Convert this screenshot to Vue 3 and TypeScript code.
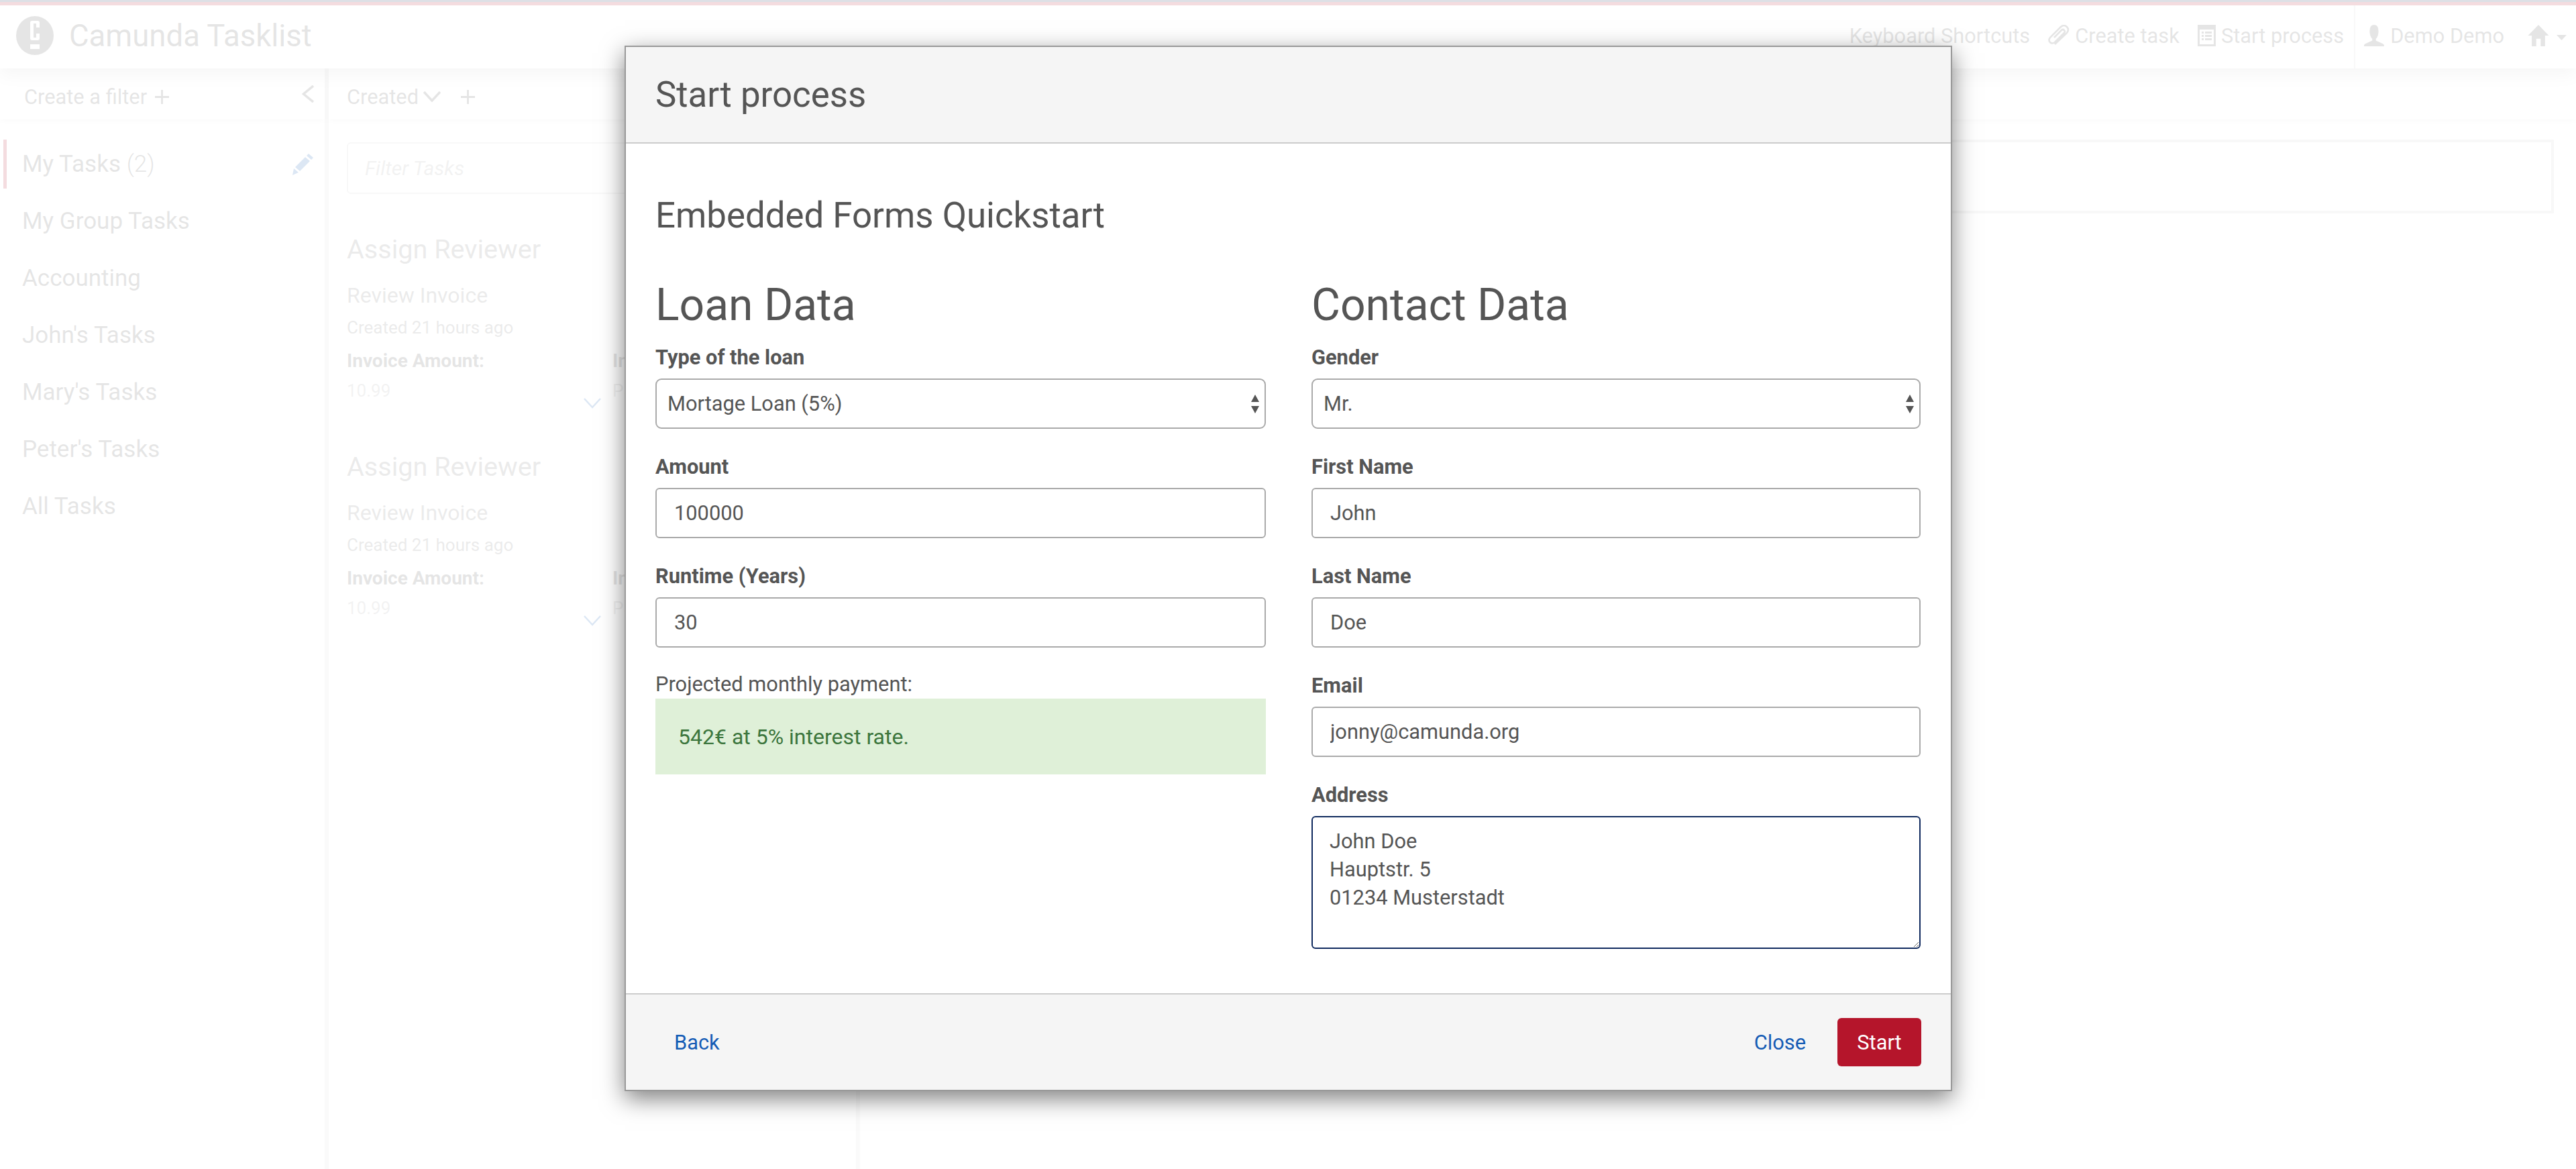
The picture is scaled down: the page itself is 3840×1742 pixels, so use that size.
<script setup lang="ts">
import { ref } from "vue";

const filters = ["My Group Tasks", "Accounting", "John's Tasks", "Mary's Tasks", "Peter's Tasks", "All Tasks"];
const cards = [1, 2];
const address = ref("John Doe\nHauptstr. 5\n01234 Musterstadt");
</script>

<template>
  <div class="page">
    <div class="strip"></div>
    <header class="topbar">
      <div class="brand">
        <svg class="logo" viewBox="0 0 56 58">
          <ellipse cx="28" cy="29" rx="28" ry="29" fill="#555" />
          <path d="M21 10q0-3 3-3h8q3 0 3 3v7h-5v-6h-4v21h4v-6h5v7q0 3-3 3h-8q-3 0-3-3z" fill="#fff" />
          <rect x="21" y="42" width="14" height="7" fill="#fff" />
        </svg>
        <span class="brand-name">Camunda Tasklist</span>
      </div>
      <nav class="nav">
        <span class="nav-item kb">Keyboard Shortcuts</span>
        <span class="nav-item">
          <svg class="ico" viewBox="0 0 32 32"><path d="M10 29 28 12q4-5 0-9t-9 0L3 19q-3 4 0 7t7 0L24 12q2-2 0-4t-4 0L9 19" fill="none" stroke="#555" stroke-width="2.600" /></svg>
          Create task
        </span>
        <span class="nav-item">
          <svg class="ico narrow" viewBox="0 0 27 32"><path fill-rule="evenodd" d="M0 0h27v32H0zM3 7v22h21V7zM6 10h3v3H6zM11 10h10v3H11zM6 15h3v3H6zM11 15h10v3H11zM6 20h3v3H6zM11 20h10v3H11z" fill="#555" /></svg>
          Start process
        </span>
        <span class="divider"></span>
        <span class="nav-item user">
          <svg class="ico" viewBox="0 0 32 34"><path d="M16 0q7 0 7 10 0 8-4 12v3l11 5q2 1 2 3v1H0v-1q0-2 2-3l11-5v-3q-4-4-4-12 0-10 7-10z" fill="#555" /></svg>
          Demo Demo
        </span>
        <span class="home">
          <svg class="ico" viewBox="0 0 33 34"><path d="M16.500 0 33 17h-6v17h-7V22h-7v12H6V17H0z" fill="#555" /></svg>
          <svg class="caret" viewBox="0 0 15 8"><path d="M0 0h15L7.500 8z" fill="#555" /></svg>
        </span>
      </nav>
    </header>

    <main class="columns">
      <aside class="sidebar">
        <div class="bar">
          <span>Create a filter</span>
          <svg class="plus" viewBox="0 0 22 22"><path d="M11 0v22M0 11h22" stroke="#555" stroke-width="3" /></svg>
          <svg class="back" viewBox="0 0 18 26"><path d="M17 1 2.500 13 17 25" fill="none" stroke="#555" stroke-width="3.500" /></svg>
        </div>
        <div class="filter active">
          <span>My Tasks <span class="count">(2)</span></span>
          <svg class="pencil" viewBox="0 0 32 32"><path d="M25 0l7 6-3 3-7-6zM20 5l7 6-15 15-7-6zM3 22l7 6-9 4z" fill="#155cb5" /></svg>
        </div>
        <div v-for="f in filters" :key="f" class="filter">{{ f }}</div>
      </aside>

      <section class="list">
        <div class="bar list-bar">
          <span>Created</span>
          <svg class="down" viewBox="0 0 26 16"><path d="M1 1l12 13L25 1" fill="none" stroke="#555" stroke-width="3.500" /></svg>
          <svg class="plus wide" viewBox="0 0 22 22"><path d="M11 0v22M0 11h22" stroke="#555" stroke-width="3" /></svg>
        </div>
        <div class="search">Filter Tasks</div>
        <article v-for="c in cards" :key="c" class="card">
          <h3>Assign Reviewer</h3>
          <p class="sub">Review Invoice</p>
          <p class="time">Created 21 hours ago</p>
          <div class="vars">
            <div><strong>Invoice Amount:</strong><span>10.99</span></div>
            <div><strong>Invoice Number:</strong><span>PSACE-5342</span></div>
          </div>
          <svg class="card-down" viewBox="0 0 26 16"><path d="M1 1l12 13L25 1" fill="none" stroke="#155cb5" stroke-width="2.500" /></svg>
        </article>
      </section>

      <section class="detail">
        <div class="bar blank"></div>
        <div class="detail-box"></div>
      </section>
    </main>

    <div class="overlay"></div>

    <div class="modal">
      <div class="modal-head">Start process</div>
      <form class="modal-body">
        <h3 class="form-title">Embedded Forms Quickstart</h3>
        <div class="form-cols">
          <div class="col">
            <h2>Loan Data</h2>
            <div class="group">
              <label>Type of the loan</label>
              <div class="select-wrap">
                <select><option>Mortage Loan (5%)</option></select>
                <svg class="updown" viewBox="0 0 14 28"><path d="M7 0l6 11H1zM7 28 1 17h12z" fill="#555" /></svg>
              </div>
            </div>
            <div class="group"><label>Amount</label><input value="100000" /></div>
            <div class="group"><label>Runtime (Years)</label><input value="30" /></div>
            <div class="projected">Projected monthly payment:</div>
            <div class="result">542€ at 5% interest rate.</div>
          </div>
          <div class="col">
            <h2>Contact Data</h2>
            <div class="group">
              <label>Gender</label>
              <div class="select-wrap">
                <select><option>Mr.</option></select>
                <svg class="updown" viewBox="0 0 14 28"><path d="M7 0l6 11H1zM7 28 1 17h12z" fill="#555" /></svg>
              </div>
            </div>
            <div class="group"><label>First Name</label><input value="John" /></div>
            <div class="group"><label>Last Name</label><input value="Doe" /></div>
            <div class="group"><label>Email</label><input value="jonny@camunda.org" /></div>
            <div class="group">
              <label>Address</label>
              <textarea v-model="address"></textarea>
            </div>
          </div>
        </div>
      </form>
      <div class="modal-foot">
        <a class="link">Back</a>
        <span class="spacer"></span>
        <a class="link">Close</a>
        <button type="button" class="start">Start</button>
      </div>
    </div>
  </div>
</template>

<style>
html, body { margin: 0; background: #fff; }
</style>

<style scoped>
.page {
  position: relative;
  width: 3840px;
  height: 1742px;
  overflow: hidden;
  background: #fff;
  color: #555;
  font-family: Roboto, "Noto Sans", sans-serif;
  font-size: 30.8px;
}
.strip { height: 8px; box-sizing: border-box; background: #b5152b; border-top: 3px solid #1c3058; position: relative; z-index: 1; }
.topbar {
  height: 94px;
  display: flex;
  justify-content: space-between;
  align-items: center;
  box-shadow: 0 8px 26px rgba(0, 0, 0, .28);
  position: relative;
  background: #fff;
}
.brand { display: flex; align-items: center; padding-left: 24px; gap: 23px; margin-top: -4px; }
.logo { width: 56px; height: 58px; }
.brand-name { font-size: 45.500px; }
.nav { display: flex; align-items: center; height: 100%; padding-right: 14px; }
.nav-item { display: flex; align-items: center; gap: 8px; margin-left: 27px; margin-top: -4px; white-space: nowrap; }
.nav-item.kb { margin-left: 0; }
.ico { width: 32px; height: 32px; }
.ico.narrow { width: 27px; }
.divider { width: 2px; height: 94px; background: #ccc; margin: 0 12px 0 15px; }
.nav-item.user { margin-left: 0; }
.home { display: flex; align-items: center; gap: 11px; margin-left: 35px; margin-top: -4px; }
.caret { width: 15px; height: 8px; margin-top: 6px; }

.columns { display: flex; height: 1640px; }
.bar {
  height: 76px;
  display: flex;
  align-items: center;
  box-sizing: border-box;
  font-size: 30.800px;
  box-shadow: 0 3px 8px rgba(0, 0, 0, .12);
  padding-top: 8px;
}
.sidebar { width: 484px; flex: none; position: relative; }
.sidebar .bar { padding-left: 36px; padding-right: 16px; gap: 12px; }
.plus { width: 21px; height: 21px; }
.plus.wide { margin-left: 23px; }
.back { width: 18px; height: 26px; margin-left: auto; margin-top: -8px; }
.filter {
  height: 85px;
  display: flex;
  align-items: center;
  justify-content: space-between;
  padding: 0 17px 0 33px;
  font-size: 35px;
}
.filter.active { position: relative; margin-top: 24px; }
.filter.active::before {
  content: "";
  position: absolute;
  left: 5px;
  top: 6px;
  bottom: 6px;
  width: 5px;
  background: #b5152b;
}
.count { font-weight: 300; }
.pencil { width: 32px; height: 32px; }

.list {
  width: 798px;
  flex: none;
  border-left: 6px solid #ddd;
  border-right: 6px solid #ddd;
  padding: 0;
  box-sizing: border-box;
}
.list-bar { padding-left: 27px; gap: 7px; }
.down { width: 26px; height: 16px; }
.search {
  margin: 34px 26px 0 27px;
  height: 77px;
  border: 2px solid #ccc;
  border-radius: 6px;
  box-sizing: border-box;
  padding-left: 25px;
  display: flex;
  align-items: center;
  font-style: italic;
  color: #aaa;
  font-size: 30px;
}
.card { position: relative; padding: 0 0 0 27px; height: 324px; }
.card h3 { margin: 0; padding-top: 60px; font-size: 39.600px; font-weight: 400; line-height: 46px; color: #777; }
.sub { margin: 25px 0 0; font-size: 32px; line-height: 40px; color: #777; }
.time { margin: 10px 0 0; font-size: 26px; line-height: 36px; color: #777; }
.vars { display: grid; grid-template-columns: 396px 396px; margin-top: 14px; font-size: 28px; }
.vars div { display: flex; flex-direction: column; }
.vars strong { line-height: 36px; }
.vars span { line-height: 36px; margin-top: 8px; color: #aaa; font-size: 26px; }
.card-down { position: absolute; left: 380px; top: 304px; width: 26px; height: 16px; }

.detail { flex: 1; min-width: 0; }
.detail-box {
  margin: 30px 33px 0 0;
  height: 110px;
  border: 4px solid #ccc;
  box-sizing: border-box;
}

.overlay { position: absolute; inset: 0; z-index: 2; background: rgba(255, 255, 255, .85); }

.modal {
  position: absolute;
  z-index: 3;
  left: 931px;
  top: 68px;
  width: 1979px;
  height: 1558px;
  box-sizing: border-box;
  border: 2px solid #999;
  background: #fff;
  box-shadow: 0 11px 33px rgba(0, 0, 0, .5);
  display: flex;
  flex-direction: column;
}
.modal-head {
  height: 144px;
  box-sizing: border-box;
  background: #f5f5f5;
  border-bottom: 2px solid #ccc;
  padding-left: 44px;
  display: flex;
  align-items: center;
  font-size: 52.800px;
}
.modal-body { flex: 1; padding: 0 44px; min-height: 0; }
.form-title { margin: 77px 0 0; font-size: 52.800px; line-height: 60px; font-weight: 400; }
.form-cols { display: grid; grid-template-columns: 910px 908px; column-gap: 68px; margin-top: 66px; }
.col h2 { margin: 0 0 16px; font-size: 66px; line-height: 76px; font-weight: 400; }
.group { margin-bottom: 33px; }
label { display: block; font-weight: 700; height: 44px; line-height: 48px; margin-bottom: 11px; }
input, select, textarea {
  display: block;
  width: 100%;
  box-sizing: border-box;
  border: 2px solid #aaa;
  border-radius: 6px;
  color: #555;
  background: #fff;
  font: inherit;
  margin: 0;
  outline: none;
}
input { height: 75px; padding: 0 26px; }
select { height: 75px; padding: 0 16px; appearance: none; border-radius: 9px; }
textarea { height: 198px; padding: 15px 25px; line-height: 42px; border-color: #102a5e; display: block; }
.select-wrap { position: relative; }
.updown { position: absolute; right: 9px; top: 24px; width: 14px; height: 28px; }
.projected { height: 43px; line-height: 44px; margin-top: 5px; }
.result {
  height: 113px;
  box-sizing: border-box;
  background: #dff0d8;
  color: #3c763d;
  display: flex;
  align-items: center;
  padding-left: 34px;
  font-size: 32px;
}
.modal-foot {
  height: 144px;
  box-sizing: border-box;
  background: #f5f5f5;
  border-top: 2px solid #ccc;
  display: flex;
  align-items: center;
  padding: 0 44px 0 72px;
}
.spacer { flex: 1; }
.link { color: #155cb5; }
.start {
  width: 125px;
  height: 72px;
  margin-left: 47px;
  border: 0;
  border-radius: 6px;
  background: #b5152b;
  color: #fff;
  font: inherit;
}
</style>
